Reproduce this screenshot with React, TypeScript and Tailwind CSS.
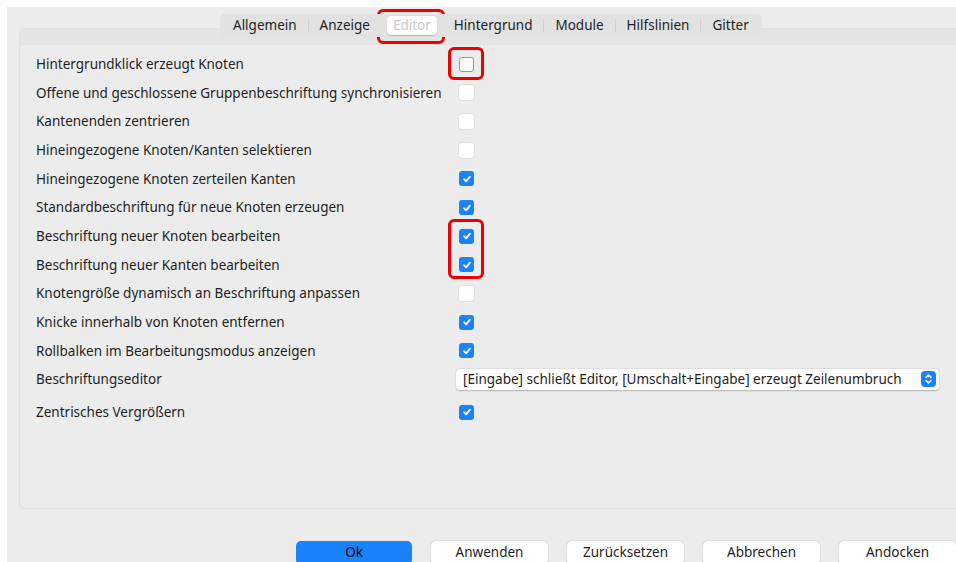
import { Fragment } from "react";

type Row = { label: string; checked?: boolean };

const rows: Row[] = [
  { label: "Hintergrundklick erzeugt Knoten", checked: false },
  { label: "Offene und geschlossene Gruppenbeschriftung synchronisieren", checked: false },
  { label: "Kantenenden zentrieren", checked: false },
  { label: "Hineingezogene Knoten/Kanten selektieren", checked: false },
  { label: "Hineingezogene Knoten zerteilen Kanten", checked: true },
  { label: "Standardbeschriftung für neue Knoten erzeugen", checked: true },
  { label: "Beschriftung neuer Knoten bearbeiten", checked: true },
  { label: "Beschriftung neuer Kanten bearbeiten", checked: true },
  { label: "Knotengröße dynamisch an Beschriftung anpassen", checked: false },
  { label: "Knicke innerhalb von Knoten entfernen", checked: true },
  { label: "Rollbalken im Bearbeitungsmodus anzeigen", checked: true },
];

const tabs = ["Allgemein", "Anzeige", "Editor", "Hintergrund", "Module", "Hilfslinien", "Gitter"];

const Checkbox = ({ checked, focused }: { checked?: boolean; focused?: boolean }) =>
  checked ? (
    <div className="w-[15px] h-[15px] rounded-[3px] bg-[#1a82fb] flex items-center justify-center">
      <svg width="10" height="10" viewBox="0 0 10 10">
        <path d="M2 5.2 L4.1 7.4 L8 2.6" fill="none" stroke="white" strokeWidth="1.7" strokeLinecap="round" strokeLinejoin="round" />
      </svg>
    </div>
  ) : (
    <div
      className={
        focused
          ? "w-[15px] h-[15px] rounded-[3px] bg-white border border-[#8a9bb0]"
          : "w-[15px] h-[15px] rounded-[3px] bg-white shadow-[0_0_0_0.5px_#d4d4d4]"
      }
    />
  );

const buttons = ["Ok", "Anwenden", "Zurücksetzen", "Abbrechen", "Andocken"];

export default function App() {
  return (
    <div
      className="w-[956px] h-[562px] bg-white overflow-hidden relative text-[13.5px] text-[#1e1e1e]"
      style={{ fontFamily: "'Noto Sans', 'Open Sans', sans-serif" }}
    >
      <div className="ml-[7px] mt-[7px] h-[555px] bg-[#ececec] flex flex-col">
        {/* tab strip */}
        <div className="shrink-0 ml-[213px] mt-[7px] h-[23px] flex items-center rounded-[5px] bg-[#e2e2e2] px-[2px] relative z-10 self-start">
          {tabs.map((t, i) => (
            <Fragment key={t}>
              {i > 0 && t !== "Editor" && tabs[i - 1] !== "Editor" && (
                <div className="w-px h-[13px] bg-[#d0d0d0]" />
              )}
              {t === "Editor" ? (
                <div className="mx-[6px] h-[19px] px-[6px] flex items-center rounded-[4px] bg-white text-[#c9c9c9] shadow-[0_0.5px_1px_rgba(0,0,0,0.2)]">
                  {t}
                </div>
              ) : (
                <div className="px-[11px] h-[19px] flex items-center">{t}</div>
              )}
            </Fragment>
          ))}
        </div>

        {/* settings panel */}
        <div className="shrink-0 ml-[12px] -mr-[10px] -mt-[9px] h-[481px] rounded-[5px] border border-[#e0e0e0] bg-[#ececec] flex flex-col">
          <div className="h-[16px] bg-[#e4e4e4] rounded-t-[5px]" />
          <div className="pl-[16px] pt-[5px] grid grid-cols-[423px_1fr] auto-rows-[28.65px] items-center">
            {rows.map((r, i) => (
              <Fragment key={r.label}>
                <div className="whitespace-nowrap">{r.label}</div>
                <div>
                  <Checkbox checked={r.checked} focused={i === 0} />
                </div>
              </Fragment>
            ))}
            <div>Beschriftungseditor</div>
            <div className="pr-[26px] -ml-[3px]">
              <div className="h-[21px] rounded-[4px] bg-white shadow-[0_0.5px_1.5px_rgba(0,0,0,0.25)] flex items-center justify-between pl-[7px] pr-[3px]">
                <span className="whitespace-nowrap">
                  [Eingabe] schließt Editor, [Umschalt+Eingabe] erzeugt Zeilenumbruch
                </span>
                <div className="w-[15px] h-[16px] rounded-[4px] bg-[#1a82fb] flex items-center justify-center">
                  <svg width="9" height="12" viewBox="0 0 9 12">
                    <path d="M2 4.5 L4.5 2 L7 4.5 M2 7.5 L4.5 10 L7 7.5" fill="none" stroke="white" strokeWidth="1.5" strokeLinecap="round" strokeLinejoin="round" />
                  </svg>
                </div>
              </div>
            </div>
            <div className="mt-[8px]">Zentrisches Vergrößern</div>
            <div className="mt-[8px]">
              <Checkbox checked />
            </div>
          </div>
        </div>

        {/* dialog buttons */}
        <div className="shrink-0 ml-[289px] mt-[32px] flex gap-[19px]">
          {buttons.map((b) =>
            b === "Ok" ? (
              <div key={b} className="w-[118px] h-[24px] rounded-[5px] bg-[#1a82fb] text-black flex items-start pt-[1px] justify-center">
                {b}
              </div>
            ) : (
              <div key={b} className="w-[119px] h-[24px] rounded-[5px] bg-white shadow-[0_0.5px_1.5px_rgba(0,0,0,0.25)] flex items-start pt-[1px] justify-center">
                {b}
              </div>
            )
          )}
        </div>
      </div>

      {/* red highlight frames */}
      <div className="absolute left-[377px] top-[9px] w-[68px] h-[35px] rounded-[6px] border-[3px] border-[#ee0000]" />
      <div className="absolute left-[448px] top-[47px] w-[36px] h-[33px] rounded-[6px] border-[3px] border-[#ee0000]" />
      <div className="absolute left-[448px] top-[219px] w-[36px] h-[60px] rounded-[6px] border-[3px] border-[#ee0000]" />
    </div>
  );
}
